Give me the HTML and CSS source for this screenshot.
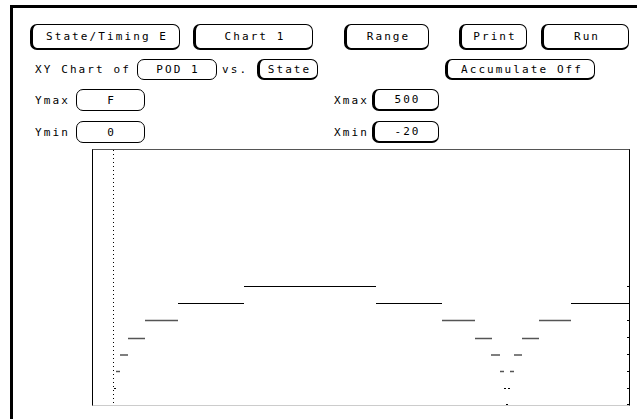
FILE: index.html
```html
<!DOCTYPE html>
<html lang="en">

<head>
  <meta charset="UTF-8">
  <title>XY Chart</title>
  <link rel="stylesheet" href="styles.css">
</head>

<body>
  <div class="screen">
    <!-- top menu buttons -->
    <div class="row row-top">
      <div class="btn btn-raised w-module">State/Timing E</div>
      <div class="btn btn-raised w-chart">Chart 1</div>
      <div class="btn btn-raised w-range">Range</div>
      <div class="btn btn-raised w-print">Print</div>
      <div class="btn btn-raised w-run">Run</div>
    </div>

    <div class="row row-xy">
      <span class="label lbl-xy">XY Chart of</span>
      <div class="btn w-pod">POD 1</div>
      <span class="label lbl-vs">vs.</span>
      <div class="btn btn-raised w-state">State</div>
      <div class="btn btn-raised w-accum">Accumulate Off</div>
    </div>

    <div class="row row-lim">
      <span class="label lbl-y">Ymax</span>
      <div class="btn w-yval">F</div>
      <span class="label lbl-x">Xmax</span>
      <div class="btn btn-raised w-xval">500</div>
    </div>

    <div class="row row-lim row-min">
      <span class="label lbl-y">Ymin</span>
      <div class="btn w-yval">0</div>
      <span class="label lbl-x">Xmin</span>
      <div class="btn btn-raised w-xval">-20</div>
    </div>

    <!-- chart area, svg uses page coordinates -->
    <div class="chart">
      <svg class="plot" viewBox="93 150 536 255" width="536" height="255">
        <line class="cursor" x1="113.5" y1="150" x2="113.5" y2="406" />

        <g class="ticks">
          <line x1="627" y1="286.5" x2="629" y2="286.5" />
          <line x1="627" y1="320.5" x2="629" y2="320.5" />
          <line x1="627" y1="337.5" x2="629" y2="337.5" />
          <line x1="627" y1="354.5" x2="629" y2="354.5" />
          <line x1="627" y1="371.5" x2="629" y2="371.5" />
          <line x1="627" y1="388.5" x2="629" y2="388.5" />
          <line x1="627" y1="404.5" x2="629" y2="404.5" />
        </g>

        <g class="step step-hi">
          <line x1="244" y1="286.5" x2="376" y2="286.5" />
          <line x1="178" y1="303.5" x2="244" y2="303.5" />
          <line x1="376" y1="303.5" x2="442" y2="303.5" />
          <line x1="571" y1="303.5" x2="629" y2="303.5" />
        </g>

        <g class="step step-lo">
          <line x1="145" y1="320.5" x2="178" y2="320.5" />
          <line x1="442" y1="320.5" x2="475" y2="320.5" />
          <line x1="539" y1="320.5" x2="571" y2="320.5" />

          <line x1="128" y1="338.5" x2="145" y2="338.5" />
          <line x1="475" y1="338.5" x2="492" y2="338.5" />
          <line x1="522" y1="338.5" x2="539" y2="338.5" />

          <line x1="120" y1="355" x2="128" y2="355" />
          <line x1="491" y1="355" x2="500" y2="355" />
          <line x1="514" y1="355" x2="522" y2="355" />

          <line x1="116" y1="371.5" x2="120" y2="371.5" />
          <line x1="500" y1="371.5" x2="504" y2="371.5" />
          <line x1="510" y1="371.5" x2="514" y2="371.5" />
        </g>

        <g class="step step-dot">
          <line x1="114" y1="388.5" x2="116" y2="388.5" />
          <line x1="504" y1="388.5" x2="506" y2="388.5" />
          <line x1="508" y1="388.5" x2="510" y2="388.5" />
          <line x1="506" y1="404.5" x2="508" y2="404.5" />
        </g>
      </svg>
    </div>
  </div>
</body>

</html>
```

FILE: styles.css
```css
html,
body {
  margin: 0;
  padding: 0;
  background-color: #fff;
  overflow: hidden;
}

body {
  font-family: "DejaVu Sans Mono", "Liberation Mono", monospace;
  font-size: 11px;
  letter-spacing: 2.1px;
  color: #000;
}

.screen {
  margin: 5px 0 0 10px;
  height: 414px;
  border-top: 3px solid #000;
  border-left: 3px solid #000;
  box-sizing: border-box;
}

.row {
  display: flex;
  align-items: center;
}

.row-top {
  margin-top: 16px;
  height: 26px;
}

.row-xy {
  margin-top: 9px;
  height: 21px;
}

.row-lim {
  margin-top: 9px;
  height: 22px;
}

.row-min {
  margin-top: 10px;
}

/* buttons */
.btn {
  box-sizing: border-box;
  height: 100%;
  display: flex;
  align-items: center;
  justify-content: center;
  padding-left: 2px;
  border: 1px solid #000;
  border-radius: 7px;
  white-space: nowrap;
}

.btn-raised {
  border-left-width: 3px;
  border-bottom-width: 2px;
}

.w-module { margin-left: 17px; width: 150px; }
.w-chart  { margin-left: 13px; width: 120px; }
.w-range  { margin-left: 31px; width: 85px; }
.w-print  { margin-left: 30px; width: 68px; }
.w-run    { margin-left: 14px; width: 88px; }

.w-pod    { width: 80px; }
.w-state  { width: 61px; }
.w-accum  { margin-left: 127px; width: 150px; }

.w-yval   { width: 69px; }
.w-xval   { width: 67px; }

/* labels */
.label {
  white-space: nowrap;
}

.lbl-xy {
  margin-left: 22px;
  width: 102px;
}

.lbl-vs {
  width: 35px;
  padding-left: 5px;
}

.lbl-y {
  margin-left: 22px;
  width: 41px;
}

.lbl-x {
  margin-left: 189px;
  width: 38px;
}

/* chart */
.chart {
  margin: 6px 0 0 79px;
  width: 538px;
  height: 257px;
  box-sizing: border-box;
  border-top: 1px solid #555;
  border-left: 1px solid #000;
  border-right: 1px solid #000;
  border-bottom: 1px solid #ccc;
}

.plot {
  display: block;
}

.cursor {
  stroke: #000;
  stroke-width: 1;
  stroke-dasharray: 1 3;
}

.ticks line {
  stroke: #000;
  stroke-width: 1;
}

.step-hi line {
  stroke: #000;
  stroke-width: 1;
}

.step-lo line {
  stroke: #555;
  stroke-width: 1.5;
}

.step-dot line {
  stroke: #000;
  stroke-width: 1;
}
```
